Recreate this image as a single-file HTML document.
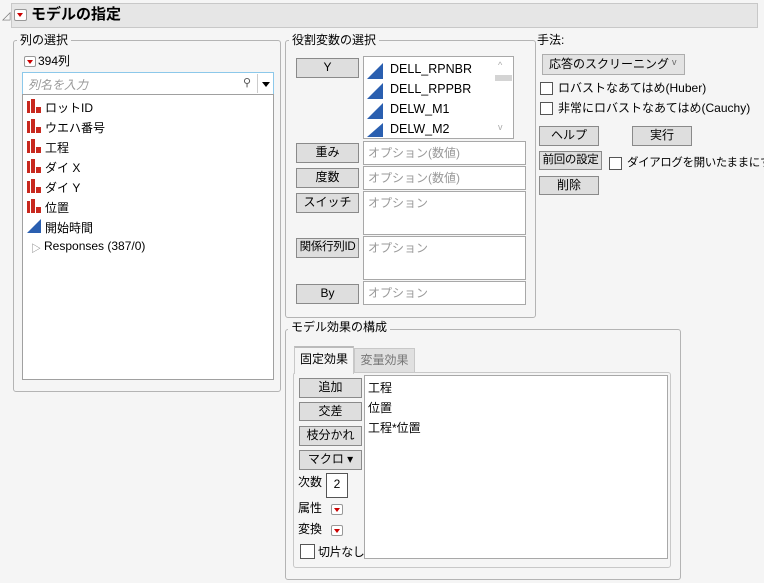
<!DOCTYPE html>
<html><head><meta charset="utf-8"><style>
*{box-sizing:border-box;margin:0;padding:0}
body{width:764px;height:583px;background:#f5f5f5;font-family:"Liberation Sans","Noto Sans CJK JP",sans-serif;font-size:12px;color:#000;position:relative;overflow:hidden}
.a{position:absolute;white-space:nowrap}
.grp{position:absolute;border:1px solid #b4b4b4;border-radius:3px}
.lbl{position:absolute;background:#f5f5f5;padding:0 3px;font-size:12px;line-height:14px}
.btn{position:absolute;background:#dedede;border:1px solid #8a8a8a;text-align:center;font-size:12px;line-height:17px}
.fld{position:absolute;background:#fff;border:1px solid #a8a8a8;color:#999;font-size:12px;padding:3px 4px;line-height:16px}
.cb{position:absolute;width:13px;height:13px;background:#fff;border:1px solid #555}
.red{position:absolute;width:12px;height:11px;border:1px solid #999;background:#fff;border-radius:2px}
.red:after{content:"";position:absolute;left:2px;top:3px;border-left:3px solid transparent;border-right:3px solid transparent;border-top:4px solid #c00}
.tri{position:absolute;width:0;height:0;border-left:16px solid transparent;border-bottom:16px solid #2a5fb0}
</style></head><body>
<!-- title -->
<div class="a" style="left:2px;top:9px;color:#777;font-size:11px">◿</div>
<div class="a" style="left:11px;top:3px;width:747px;height:25px;background:#e6e6e6;border:1px solid #c8c8c8"></div>
<div class="red" style="left:14px;top:9px;width:13px;height:12px"></div>
<div class="a" style="left:31px;top:5px;font-size:15px;font-weight:bold;line-height:20px">モデルの指定</div>

<!-- column select -->
<div class="grp" style="left:13px;top:40px;width:268px;height:352px"></div>
<div class="lbl" style="left:17px;top:33px">列の選択</div>
<div class="red" style="left:24px;top:56px"></div>
<div class="a" style="left:38px;top:54px;line-height:14px">394列</div>
<div class="a" style="left:22px;top:72px;width:252px;height:23px;background:#fff;border:1px solid #8cc8ea"></div>
<div class="a" style="left:28px;top:76px;color:#999;font-style:italic">列名を入力</div>
<div class="a" style="left:243px;top:76px;color:#555;font-size:11px">⚲</div>
<div class="a" style="left:257px;top:74px;width:1px;height:19px;background:#ccc"></div>
<div class="a" style="left:262px;top:82px;border-left:4px solid transparent;border-right:4px solid transparent;border-top:5px solid #000"></div>
<div class="a" style="left:22px;top:94px;width:252px;height:286px;background:#fff;border:1px solid #a0a0a0"></div>
<svg class="a" style="left:27px;top:99px" width="14" height="134">
<g fill="#c8281e">
<g transform="translate(0,0)"><rect x="0" y="2" width="3" height="12"/><rect x="4" y="0" width="4" height="14"/><rect x="9" y="8" width="5" height="6"/></g>
<g transform="translate(0,20)"><rect x="0" y="2" width="3" height="12"/><rect x="4" y="0" width="4" height="14"/><rect x="9" y="8" width="5" height="6"/></g>
<g transform="translate(0,40)"><rect x="0" y="2" width="3" height="12"/><rect x="4" y="0" width="4" height="14"/><rect x="9" y="8" width="5" height="6"/></g>
<g transform="translate(0,60)"><rect x="0" y="2" width="3" height="12"/><rect x="4" y="0" width="4" height="14"/><rect x="9" y="8" width="5" height="6"/></g>
<g transform="translate(0,80)"><rect x="0" y="2" width="3" height="12"/><rect x="4" y="0" width="4" height="14"/><rect x="9" y="8" width="5" height="6"/></g>
<g transform="translate(0,100)"><rect x="0" y="2" width="3" height="12"/><rect x="4" y="0" width="4" height="14"/><rect x="9" y="8" width="5" height="6"/></g>
</g>
<polygon points="0,134 14,120 14,134" fill="#2a5fb0"/>
</svg>
<div class="a" style="left:45px;top:98px;line-height:20px">ロットID<br>ウエハ番号<br>工程<br>ダイ X<br>ダイ Y<br>位置<br>開始時間</div>
<div class="a" style="left:31px;top:240px;color:#777;font-size:10px">▷</div>
<div class="a" style="left:44px;top:238px;line-height:16px">Responses (387/0)</div>

<!-- role variables -->
<div class="grp" style="left:285px;top:40px;width:251px;height:278px"></div>
<div class="lbl" style="left:289px;top:33px">役割変数の選択</div>
<div class="btn" style="left:296px;top:58px;width:63px;height:20px">Y</div>
<div class="a" style="left:363px;top:56px;width:151px;height:83px;background:#fff;border:1px solid #a8a8a8"></div>
<div class="a" style="left:495px;top:75px;width:17px;height:6px;background:#d4d4d4"></div>
<div class="a" style="left:498px;top:60px;color:#aaa;font-size:9px">^</div>
<div class="a" style="left:498px;top:122px;color:#aaa;font-size:9px">v</div>
<div class="tri" style="left:367px;top:63px"></div>
<div class="tri" style="left:367px;top:83px"></div>
<div class="tri" style="left:367px;top:103px"></div>
<div class="tri" style="left:367px;top:123px;border-bottom-width:14px"></div>
<div class="a" style="left:390px;top:59px;line-height:20px;font-size:12.5px">DELL_RPNBR<br>DELL_RPPBR<br>DELW_M1<br>DELW_M2</div>
<div class="btn" style="left:296px;top:143px;width:63px;height:20px">重み</div>
<div class="fld" style="left:363px;top:141px;width:163px;height:24px">オプション(数値)</div>
<div class="btn" style="left:296px;top:168px;width:63px;height:20px">度数</div>
<div class="fld" style="left:363px;top:166px;width:163px;height:24px">オプション(数値)</div>
<div class="btn" style="left:296px;top:193px;width:63px;height:20px">スイッチ</div>
<div class="fld" style="left:363px;top:191px;width:163px;height:44px">オプション</div>
<div class="btn" style="left:296px;top:238px;width:63px;height:20px;font-size:11.5px;letter-spacing:-0.3px">関係行列ID</div>
<div class="fld" style="left:363px;top:236px;width:163px;height:44px">オプション</div>
<div class="btn" style="left:296px;top:284px;width:63px;height:20px">By</div>
<div class="fld" style="left:363px;top:281px;width:163px;height:24px">オプション</div>

<!-- method -->
<div class="a" style="left:537px;top:32px;line-height:16px">手法:</div>
<div class="a" style="left:542px;top:54px;width:143px;height:21px;background:#e3e3e3;border:1px solid #adadad;padding:2px 6px;line-height:15px">応答のスクリーニング</div>
<div class="a" style="left:672px;top:57px;color:#666;font-size:9px">v</div>
<div class="cb" style="left:540px;top:82px"></div>
<div class="a" style="left:558px;top:80px;line-height:16px">ロバストなあてはめ(Huber)</div>
<div class="cb" style="left:540px;top:102px"></div>
<div class="a" style="left:558px;top:100px;line-height:16px">非常にロバストなあてはめ(Cauchy)</div>
<div class="btn" style="left:539px;top:126px;width:60px;height:20px">ヘルプ</div>
<div class="btn" style="left:632px;top:126px;width:60px;height:20px">実行</div>
<div class="btn" style="left:539px;top:151px;width:63px;height:19px;font-size:11.5px;letter-spacing:-0.3px">前回の設定</div>
<div class="cb" style="left:609px;top:157px"></div>
<div class="a" style="left:627px;top:155px;line-height:16px;font-size:11.5px;letter-spacing:-0.4px">ダイアログを開いたままにする</div>
<div class="btn" style="left:539px;top:176px;width:60px;height:19px">削除</div>

<!-- model effects -->
<div class="grp" style="left:285px;top:329px;width:396px;height:251px"></div>
<div class="lbl" style="left:288px;top:320px">モデル効果の構成</div>
<div class="a" style="left:293px;top:372px;width:378px;height:196px;border:1px solid #c8c8c8;border-radius:3px"></div>
<div class="a" style="left:294px;top:346px;width:60px;height:28px;background:#f5f5f5;border:1px solid #c8c8c8;border-bottom:none;border-top:2px solid #bbb;text-align:center;line-height:22px">固定効果</div>
<div class="a" style="left:354px;top:348px;width:61px;height:24px;background:#e0e0e0;border:1px solid #c8c8c8;border-bottom:none;color:#777;text-align:center;line-height:22px">変量効果</div>
<div class="btn" style="left:299px;top:378px;width:63px;height:20px">追加</div>
<div class="btn" style="left:299px;top:402px;width:63px;height:19px">交差</div>
<div class="btn" style="left:299px;top:426px;width:63px;height:20px">枝分かれ</div>
<div class="btn" style="left:299px;top:450px;width:63px;height:20px">マクロ ▾</div>
<div class="a" style="left:298px;top:474px;line-height:16px">次数</div>
<div class="a" style="left:326px;top:473px;width:22px;height:25px;background:#fff;border:1px solid #555;text-align:center;line-height:20px">2</div>
<div class="a" style="left:298px;top:500px;line-height:16px">属性</div>
<div class="red" style="left:331px;top:504px"></div>
<div class="a" style="left:298px;top:521px;line-height:16px">変換</div>
<div class="red" style="left:331px;top:525px"></div>
<div class="cb" style="left:300px;top:544px;width:15px;height:15px"></div>
<div class="a" style="left:318px;top:544px;line-height:16px;letter-spacing:-0.4px">切片なし</div>
<div class="a" style="left:364px;top:375px;width:304px;height:184px;background:#fff;border:1px solid #a8a8a8"></div>
<div class="a" style="left:368px;top:378px;line-height:20px">工程<br>位置<br>工程*位置</div>
</body></html>
